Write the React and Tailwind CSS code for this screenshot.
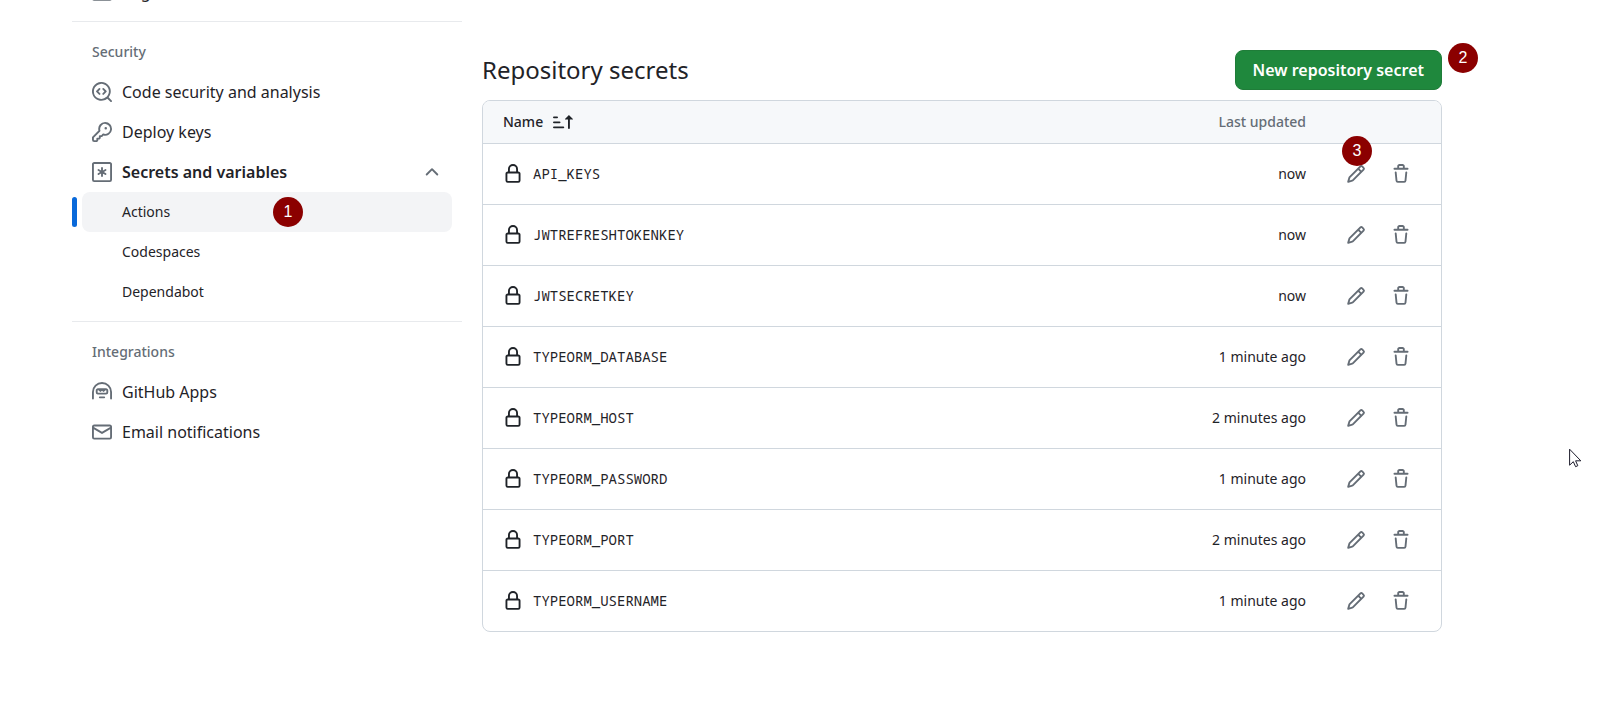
const ICONS = {
  browser: [
    'M0 2.75C0 1.784.784 1 1.75 1h12.5c.966 0 1.75.784 1.75 1.75v10.5A1.75 1.75 0 0 1 14.25 15H1.75A1.75 1.75 0 0 1 0 13.25ZM14.5 6h-13v7.25c0 .138.112.25.25.25h12.5a.25.25 0 0 0 .25-.25Zm-6-3.5v2h6V2.75a.25.25 0 0 0-.25-.25ZM5 2.5v2h2v-2Zm-3.25 0a.25.25 0 0 0-.25.25V4.5h2v-2Z',
  ],
  codescan: [
    'M8.47 4.97a.75.75 0 0 0 0 1.06L9.94 7.5 8.47 8.97a.75.75 0 1 0 1.06 1.06l2-2a.75.75 0 0 0 0-1.06l-2-2a.75.75 0 0 0-1.06 0ZM6.53 6.03a.75.75 0 0 0-1.06-1.06l-2 2a.75.75 0 0 0 0 1.06l2 2a.75.75 0 1 0 1.06-1.06L5.06 7.5l1.47-1.47Z',
    'M12.246 13.307a7.501 7.501 0 1 1 1.06-1.06l2.474 2.473a.749.749 0 1 1-1.06 1.06l-2.474-2.473ZM1.5 7.5a6.002 6.002 0 0 0 3.608 5.504 6.002 6.002 0 0 0 6.486-1.117.748.748 0 0 1 .292-.293A6 6 0 1 0 1.5 7.5Z',
  ],
  key: [
    'M10.5 0a5.499 5.499 0 1 1-1.288 10.848l-.932.932a.749.749 0 0 1-.53.22H7v.75a.749.749 0 0 1-.22.53l-.5.5a.749.749 0 0 1-.53.22H5v.75a.749.749 0 0 1-.22.53l-.5.5a.749.749 0 0 1-.53.22h-2A1.75 1.75 0 0 1 0 14.25v-2c0-.199.079-.389.22-.53l4.932-4.932A5.5 5.5 0 0 1 10.5 0Zm-4 5.5c-.001.431.069.86.205 1.269a.75.75 0 0 1-.181.768L1.5 12.56v1.69c0 .138.112.25.25.25h1.69l.06-.06v-1.19a.75.75 0 0 1 .75-.75h1.19l.06-.06v-1.19a.75.75 0 0 1 .75-.75h1.19l1.023-1.025a.75.75 0 0 1 .768-.18A4 4 0 1 0 6.5 5.5ZM11 6a1 1 0 1 1 0-2 1 1 0 0 1 0 2Z',
  ],
  asterisk: [
    'M0 1.75C0 .784.784 0 1.75 0h12.5C15.216 0 16 .784 16 1.75v12.5A1.75 1.75 0 0 1 14.25 16H1.75A1.75 1.75 0 0 1 0 14.25ZM1.75 1.5a.25.25 0 0 0-.25.25v12.5c0 .138.112.25.25.25h12.5a.25.25 0 0 0 .25-.25V1.75a.25.25 0 0 0-.25-.25Z',
    'M8 4a.75.75 0 0 1 .75.75V6.7l1.69-.975a.75.75 0 0 1 .75 1.3L9.5 8l1.69.976a.75.75 0 0 1-.75 1.298L8.75 9.3v1.951a.75.75 0 0 1-1.5 0V9.299l-1.69.976a.75.75 0 0 1-.75-1.3L6.5 8l-1.69-.975a.75.75 0 0 1 .75-1.3l1.69.976V4.75A.75.75 0 0 1 8 4Z',
  ],
  chevronUp: [
    'M3.22 10.53a.749.749 0 0 1 0-1.06l4.25-4.25a.749.749 0 0 1 1.06 0l4.25 4.25a.749.749 0 1 1-1.06 1.06L8 6.811 4.28 10.53a.749.749 0 0 1-1.06 0Z',
  ],
  hubot: [
    'M0 8a8 8 0 1 1 16 0v5.25a.75.75 0 0 1-1.5 0V8a6.5 6.5 0 1 0-13 0v5.25a.75.75 0 0 1-1.5 0Zm5.5 4.25a.75.75 0 0 1 .75-.75h3.5a.75.75 0 0 1 0 1.5h-3.5a.75.75 0 0 1-.75-.75Z',
    'M3 6.75C3 5.784 3.784 5 4.75 5h6.5c.966 0 1.75.784 1.75 1.75v1.5A1.75 1.75 0 0 1 11.25 10h-6.5A1.75 1.75 0 0 1 3 8.25Zm1.75-.25a.25.25 0 0 0-.25.25v1.5c0 .138.112.25.25.25h6.5a.25.25 0 0 0 .25-.25v-1.5a.25.25 0 0 0-.25-.25h-.32L9.78 7.65a.75.75 0 0 1-1.06 0L8 6.93l-.72.72a.75.75 0 0 1-1.06 0L5.07 6.5Z',
  ],
  mail: [
    'M1.75 2h12.5c.966 0 1.75.784 1.75 1.75v8.5A1.75 1.75 0 0 1 14.25 14H1.75A1.75 1.75 0 0 1 0 12.25v-8.5C0 2.784.784 2 1.75 2ZM1.5 12.251c0 .138.112.25.25.25h12.5a.25.25 0 0 0 .25-.25V5.809L8.38 9.397a.75.75 0 0 1-.76 0L1.5 5.809v6.442Zm13-8.181v-.32a.25.25 0 0 0-.25-.25H1.75a.25.25 0 0 0-.25.25v.32L8 7.88Z',
  ],
  sortAsc: [
    'm12.927 2.573 3 3A.25.25 0 0 1 15.75 6H13.5v6.75a.75.75 0 0 1-1.5 0V6H9.75a.25.25 0 0 1-.177-.427l3-3a.25.25 0 0 1 .354 0ZM0 12.25a.75.75 0 0 1 .75-.75h7.5a.75.75 0 0 1 0 1.5H.75a.75.75 0 0 1-.75-.75Zm0-4a.75.75 0 0 1 .75-.75h4.5a.75.75 0 0 1 0 1.5H.75A.75.75 0 0 1 0 8.25Zm0-4a.75.75 0 0 1 .75-.75h2.5a.75.75 0 0 1 0 1.5H.75A.75.75 0 0 1 0 4.25Z',
  ],
  lock: [
    'M4 4a4 4 0 0 1 8 0v2h.25c.966 0 1.75.784 1.75 1.75v5.5A1.75 1.75 0 0 1 12.25 15h-8.5A1.75 1.75 0 0 1 2 13.25v-5.5C2 6.784 2.784 6 3.75 6H4Zm8.25 3.5h-8.5a.25.25 0 0 0-.25.25v5.5c0 .138.112.25.25.25h8.5a.25.25 0 0 0 .25-.25v-5.5a.25.25 0 0 0-.25-.25ZM10.5 6V4a2.5 2.5 0 1 0-5 0v2Z',
  ],
  pencil: [
    'M11.013 1.427a1.75 1.75 0 0 1 2.474 0l1.086 1.086a1.75 1.75 0 0 1 0 2.474l-8.61 8.61c-.21.21-.47.364-.756.445l-3.251.93a.75.75 0 0 1-.927-.928l.929-3.25c.081-.286.235-.547.445-.758l8.61-8.61Zm.176 4.823L9.75 4.81l-6.286 6.287a.253.253 0 0 0-.064.108l-.558 1.953 1.953-.558a.253.253 0 0 0 .108-.064Zm1.238-3.763a.25.25 0 0 0-.354 0L10.811 3.75l1.439 1.44 1.263-1.263a.25.25 0 0 0 0-.354Z',
  ],
  trash: [
    'M11 1.75V3h2.25a.75.75 0 0 1 0 1.5H2.75a.75.75 0 0 1 0-1.5H5V1.75C5 .784 5.784 0 6.75 0h2.5C10.216 0 11 .784 11 1.75ZM4.496 6.675l.66 6.6a.25.25 0 0 0 .249.225h5.19a.25.25 0 0 0 .249-.225l.66-6.6a.75.75 0 0 1 1.492.149l-.66 6.6A1.748 1.748 0 0 1 10.595 15h-5.19a1.75 1.75 0 0 1-1.741-1.575l-.66-6.6a.75.75 0 1 1 1.492-.15ZM6.5 1.75V3h3V1.75a.25.25 0 0 0-.25-.25h-2.5a.25.25 0 0 0-.25.25Z',
  ],
};

function Icon({ name, className = '' }) {
  return (
    <svg viewBox="0 0 16 16" className={`size-5 shrink-0 fill-current ${className}`} aria-hidden="true">
      {ICONS[name].map((d) => (
        <path key={d} d={d} />
      ))}
    </svg>
  );
}

function Marker({ children, className }) {
  return (
    <span
      className={`absolute z-10 flex size-[30px] items-center justify-center rounded-full bg-[#8b0000] font-['Liberation_Sans',sans-serif] text-[16px] leading-none font-normal text-white ${className}`}
    >
      {children}
    </span>
  );
}

function NavItem({ icon, children }) {
  return (
    <li className="px-[10px]">
      <a href="#" className="flex h-10 items-center gap-[10px] rounded-lg px-[10px] text-[16px] leading-6">
        <Icon name={icon} className="text-[#656d76]" />
        {children}
      </a>
    </li>
  );
}

function SubItem({ active, children, marker }) {
  return (
    <li className="relative px-[10px]">
      {active && <span className="absolute top-[5px] left-0 h-[30px] w-[5px] rounded-md bg-[#0969da]" />}
      <a
        href="#"
        aria-current={active ? 'page' : undefined}
        className={`flex h-10 items-center rounded-lg pr-[10px] pl-10 text-[14px] leading-5 ${active ? 'bg-[#f3f4f6]' : ''}`}
      >
        {children}
      </a>
      {marker}
    </li>
  );
}

function NavHeading({ children }) {
  return <h3 className="flex h-10 items-center px-5 text-[14px] leading-5 font-medium text-[#656d76]">{children}</h3>;
}

function Divider() {
  return <hr className="mt-[9px] mb-[10px] border-[#e8eaed]" />;
}

function Sidebar() {
  return (
    <nav aria-label="Settings" className="-mt-7 w-[390px] shrink-0">
      <ul>
        <NavItem icon="browser">Pages</NavItem>
      </ul>
      <Divider />
      <NavHeading>Security</NavHeading>
      <ul>
        <NavItem icon="codescan">Code security and analysis</NavItem>
        <NavItem icon="key">Deploy keys</NavItem>
        <li>
          <div className="px-[10px]">
            <button
              type="button"
              aria-expanded="true"
              className="flex h-10 w-full items-center gap-[10px] rounded-lg px-[10px] text-[16px] leading-6 font-semibold"
            >
              <Icon name="asterisk" className="text-[#656d76]" />
              <span className="flex-1 text-left">Secrets and variables</span>
              <Icon name="chevronUp" className="text-[#656d76]" />
            </button>
          </div>
          <ul>
            <SubItem active marker={<Marker className="top-[5px] left-[201px]">1</Marker>}>
              Actions
            </SubItem>
            <SubItem>Codespaces</SubItem>
            <SubItem>Dependabot</SubItem>
          </ul>
        </li>
      </ul>
      <Divider />
      <NavHeading>Integrations</NavHeading>
      <ul>
        <NavItem icon="hubot">GitHub Apps</NavItem>
        <NavItem icon="mail">Email notifications</NavItem>
      </ul>
    </nav>
  );
}

const SECRETS = [
  ['API_KEYS', 'now'],
  ['JWTREFRESHTOKENKEY', 'now'],
  ['JWTSECRETKEY', 'now'],
  ['TYPEORM_DATABASE', '1 minute ago'],
  ['TYPEORM_HOST', '2 minutes ago'],
  ['TYPEORM_PASSWORD', '1 minute ago'],
  ['TYPEORM_PORT', '2 minutes ago'],
  ['TYPEORM_USERNAME', '1 minute ago'],
];

function SecretsTable() {
  return (
    <div className="mt-[10px] overflow-hidden rounded-lg border border-[#d0d7de]">
      <table className="w-full border-separate border-spacing-0 text-[14px] leading-5">
        <thead className="bg-[#f6f8fa]">
          <tr className="h-[42px]">
            <th className="pl-5 text-left font-medium">
              <button type="button" className="flex items-center gap-[10px]">
                Name
                <Icon name="sortAsc" />
              </button>
            </th>
            <th className="w-40 text-right font-medium text-[#656d76]">Last updated</th>
            <th className="w-[135px]" aria-label="Manage" />
          </tr>
        </thead>
        <tbody>
          {SECRETS.map(([name, updated], i) => (
            <tr key={name} className="h-[61px]">
              <td className="border-t border-[#d0d7de] pl-5">
                <div className="flex items-center gap-[10px]">
                  <Icon name="lock" />
                  <code className="font-['Noto_Sans_Mono','DejaVu_Sans_Mono',monospace] text-[14px]">{name}</code>
                </div>
              </td>
              <td className="border-t border-[#d0d7de] text-right">{updated}</td>
              <td className="border-t border-[#d0d7de] pr-5 text-[#656d76]">
                <div className="relative flex items-center justify-end gap-[5px]">
                  <button
                    type="button"
                    aria-label={`Edit ${name}`}
                    className="flex size-10 items-center justify-center rounded-lg"
                  >
                    <Icon name="pencil" />
                  </button>
                  <button
                    type="button"
                    aria-label={`Remove ${name}`}
                    className="flex size-10 items-center justify-center rounded-lg"
                  >
                    <Icon name="trash" />
                  </button>
                  {i === 0 && <Marker className="-top-[18px] right-[49px]">3</Marker>}
                </div>
              </td>
            </tr>
          ))}
        </tbody>
      </table>
    </div>
  );
}

function Pointer() {
  return (
    <svg viewBox="0 0 13 20" className="absolute top-[448px] left-[1569px] h-5 w-[13px]" aria-hidden="true">
      <path
        d="M.6 1.2v16l3.7-3.5 2.3 5 2.2-1-2.2-4.9h5.2Z"
        fill="#fff"
        stroke="#1c1b2b"
        strokeWidth="1"
        strokeLinejoin="round"
      />
    </svg>
  );
}

export default function App() {
  return (
    <div className="relative min-h-screen overflow-hidden bg-white font-['Noto_Sans','Open_Sans',sans-serif] text-[#1f2328]">
      <div className="flex gap-5 pr-[170px] pl-[72px]">
        <Sidebar />
        <main className="min-w-0 flex-1 pt-[50px]">
          <div className="relative flex items-center justify-between">
            <h2 className="text-[24px] leading-10">Repository secrets</h2>
            <button
              type="button"
              className="h-10 rounded-lg border border-[#1f7d39] bg-[#1f883d] px-[17px] text-[16px] leading-6 font-semibold text-white"
            >
              New repository secret
            </button>
            <Marker className="-top-[7px] -right-9">2</Marker>
          </div>
          <SecretsTable />
        </main>
      </div>
      <Pointer />
    </div>
  );
}
